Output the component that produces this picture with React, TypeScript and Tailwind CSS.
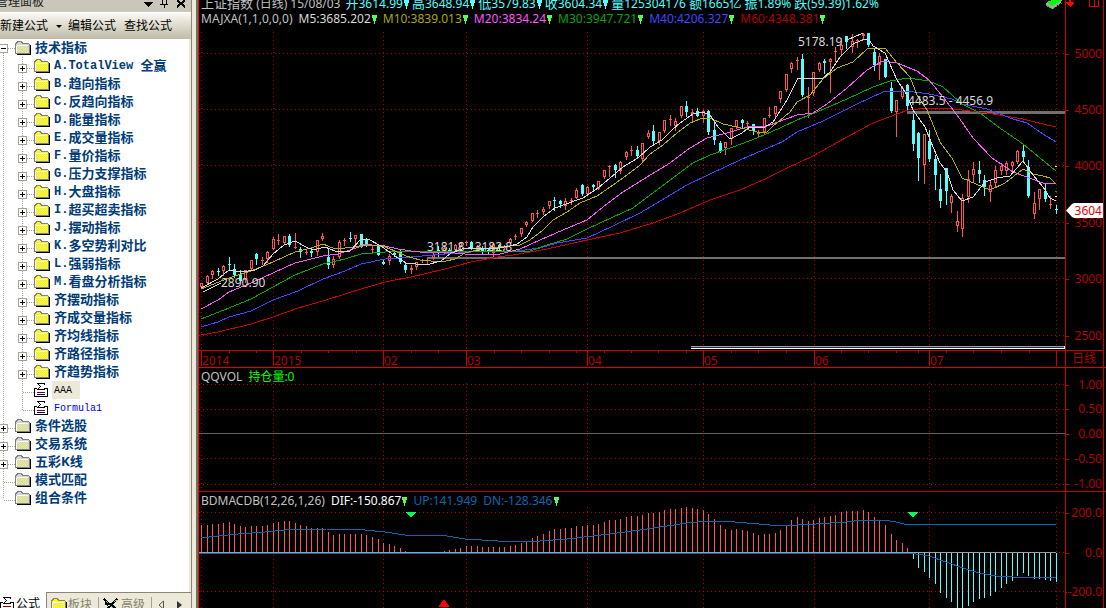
import type { ReactNode } from 'react';

const STEP = 855 / 155;
const barX = (i: number) => Math.round(201 + i * STEP);
const plotLeft = (x: number) => `${((x - 199) / 866) * 100}%`;

const months = [
  { x: 201, label: '2014' },
  { x: 273, label: '2015' },
  { x: 383, label: '02' },
  { x: 466, label: '03' },
  { x: 587, label: '04' },
  { x: 703, label: '05' },
  { x: 814, label: '06' },
  { x: 929, label: '07' },
  { x: 1056, label: '' },
];

const weekTicks = [
  229, 256, 301, 328, 356, 411, 438, 494, 521, 549, 576, 604, 631, 658, 686, 731, 758, 786, 841, 868,
  896, 918, 946, 973, 1001, 1029,
];

// high, body top, body bottom, low (in plot rows), "r" = up day, "c" = down day
const candles = `283 283 287 287 r|275 276 283 283 r|270 271 275 278 r|268 271 272 275 c|265 266 271 275 r|257 264 265 270 c
264 269 275 277 c|270 274 281 281 c|270 270 280 282 r|260 260 269 269 r|253 254 259 264 c|257 260 261 264 r
251 252 259 262 r|237 239 249 249 r|234 240 241 244 r|236 236 243 243 r|234 236 245 246 c|233 247 248 248 r
247 249 252 257 c|249 252 253 254 r|248 251 253 256 c|240 240 252 255 r|233 236 239 240 r|249 257 265 268 c
256 259 265 267 r|240 242 257 258 r|238 240 241 245 r|232 238 239 241 c|235 235 239 243 r|234 234 246 247 c
238 240 245 246 c|246 249 250 252 r|246 246 255 255 c|260 262 264 264 c|254 256 261 264 r|250 253 255 256 c
249 251 262 263 c|263 265 270 272 c|265 268 270 273 r|262 262 267 269 r|259 260 261 262 r|258 260 261 263 r
253 255 258 259 r|246 250 251 256 c|245 248 252 254 r|248 250 253 254 c|244 245 250 251 r|242 243 247 248 r
241 242 243 245 r|241 242 248 249 c|245 247 250 251 r|246 248 252 253 c|249 250 252 253 c|243 244 253 256 r
244 245 248 249 c|245 246 248 249 r|238 239 243 243 r|234 236 237 239 r|228 228 234 236 r|221 222 225 226 r
213 213 221 221 r|210 213 214 217 r|207 209 212 214 r|201 201 206 208 r|197 200 201 210 c|200 201 204 207 c
198 201 206 209 r|198 200 201 204 r|188 190 198 198 r|184 185 194 195 c|186 187 194 194 r|184 185 187 191 c
181 181 189 189 r|170 170 177 178 r|165 166 167 176 r|164 165 170 177 c|161 162 171 173 r|151 152 157 159 r
146 150 151 155 r|146 150 156 158 c|143 143 159 162 r|130 133 137 138 r|125 131 141 144 c|132 132 141 144 r
120 120 131 132 r|115 119 120 125 r|118 121 126 130 r|106 106 116 117 r|101 106 112 116 c|109 112 114 120 r
108 111 116 116 c|110 111 116 122 r|110 111 132 134 c|122 130 140 144 c|141 143 152 152 c|142 142 148 154 r
128 128 139 144 r|120 120 127 128 r|119 120 123 127 c|121 123 124 127 r|124 124 131 134 c|130 133 134 136 r
118 118 132 133 r|107 115 116 117 r|106 106 114 116 r|91 91 99 102 r|74 74 90 91 r|62 63 69 72 r
57 60 61 69 r|54 59 95 96 c|87 97 98 117 r|72 72 93 95 r|62 63 70 71 r|59 61 63 73 c
58 59 62 92 r|47 51 52 61 r|38 45 50 54 r|36 36 42 48 c|34 41 47 52 r|39 40 41 47 r
33 34 36 39 r|33 33 45 46 c|49 52 65 70 c|53 56 65 79 r|59 59 77 77 c|82 88 111 112 c
100 100 112 136 r|86 88 97 98 r|84 85 106 109 c|114 120 144 150 c|132 133 158 180 c|134 134 165 183 r
130 141 159 161 c|155 159 175 189 c|174 189 201 207 c|168 168 191 204 c|194 196 203 212 r|211 221 226 231 r
194 198 229 236 r|170 179 197 202 r|162 169 175 181 r|161 170 174 182 c|175 180 187 195 c|180 185 192 201 r
166 170 183 186 r|163 166 171 174 r|161 163 171 174 r|161 162 166 170 r|150 151 162 163 r|145 151 157 160 c
160 167 196 197 c|192 203 214 218 r|189 189 199 209 r|184 191 199 201 c|196 204 205 208 r|205 209 210 213 c`
  .split(/[|\n]/)
  .map((row) => {
    const [high, top, bottom, low, kind] = row.split(' ');
    return { high: +high, top: +top, bottom: +bottom, low: +low, up: kind === 'r' };
  });

const averages = [
  {
    color: '#c80000',
    points:
      '201,335 218,332 251,324 273,317 298,308 323,301 345,294 361,289 385,282 411,277 445,269 471,262 498,257 513,255 547,249 587,240 620,233 653,223 680,213 710,200 740,190 765,179 787,168 813,156 847,137 873,123 897,114 908,110 929,108 953,109 987,113 1023,119 1043,124 1056,127',
  },
  {
    color: '#4444ff',
    points:
      '201,327 218,322 229,317 251,311 273,300 298,291 323,279 345,271 361,264 385,259 411,257 445,254 471,252 498,251 517,251 540,248 557,243 587,238 613,226 640,213 667,197 687,185 710,174 740,160 763,150 782,142 797,132 823,121 857,104 883,92 907,91 929,94 952,99 962,104 987,109 1013,119 1027,123 1043,134 1056,142',
  },
  {
    color: '#00a800',
    points:
      '201,319 229,308 251,299 273,287 295,275 323,264 345,259 361,254 385,252 405,251 445,251 498,251 530,251 547,245 567,239 587,229 613,217 633,208 653,193 673,178 693,163 710,155 733,147 757,138 780,128 797,120 817,112 847,99 873,87 890,81 908,78 929,81 943,87 962,104 980,113 997,126 1023,144 1040,158 1056,171',
  },
  {
    color: '#ff55ff',
    points:
      '201,309 218,300 229,292 251,283 273,273 295,263 323,256 338,254 356,248 366,245 385,246 398,249 411,251 428,253 445,252 475,255 500,254 520,249 540,240 563,230 587,220 603,207 623,192 647,177 670,163 690,148 707,138 727,133 747,127 767,126 797,115 813,113 827,104 847,88 867,70 883,61 897,63 917,71 929,80 943,97 957,115 973,138 992,158 1013,172 1043,183 1056,184',
  },
  {
    color: '#b4b400',
    points:
      '201,289 229,278 251,271 273,262 295,252 311,248 323,244 335,249 355,247 366,244 385,247 395,251 406,256 420,260 431,261 446,261 455,259 465,253 481,249 500,247 520,245 530,240 543,230 553,220 567,212 580,203 597,196 613,185 627,175 640,165 650,154 663,145 677,133 690,123 700,119 710,118 723,124 737,127 757,132 767,132 773,126 790,112 797,102 810,95 823,79 837,68 853,62 868,48 885,48 897,63 910,77 917,95 927,110 940,142 952,158 962,178 990,190 1005,183 1023,169 1033,174 1043,176 1050,178 1056,184',
  },
  {
    color: '#d8d8d8',
    points:
      '201,288 218,279 229,270 241,272 255,270 263,266 273,254 284,245 295,241 306,247 313,250 325,247 335,251 350,251 361,239 368,239 381,246 398,258 406,263 426,265 441,261 451,253 465,248 498,248 510,246 517,244 527,237 533,227 543,217 555,208 563,205 583,198 598,188 610,178 623,167 638,158 650,147 662,140 672,130 680,123 693,114 703,112 710,115 718,127 730,139 742,133 750,127 763,128 773,122 787,100 798,78 823,78 830,72 840,57 853,44 865,39 870,41 873,46 885,53 897,80 907,95 913,110 925,127 933,147 940,163 947,172 953,190 962,201 973,197 985,182 997,178 1010,176 1023,161 1033,175 1043,187 1050,198 1056,201',
  },
];

// rows of the histogram end, in thirds of a pixel below 490
const histogram = [
  105, 105, 102, 102, 99, 96, 102, 108, 111, 108, 108, 108, 105, 99, 96, 93, 93, 99, 105, 108, 114, 114,
  114, 126, 135, 132, 132, 132, 132, 132, 136, 141, 147, 159, 162, 168, 174, 183, 187, 187, 187, 187, 187,
  187, 183, 180, 177, 174, 168, 168, 168, 171, 171, 171, 171, 171, 168, 165, 159, 153, 144, 138, 132, 123,
  117, 117, 114, 114, 108, 108, 105, 105, 102, 96, 90, 90, 87, 81, 78, 78, 75, 69, 69, 66, 60, 57, 57, 54,
  51, 54, 57, 60, 72, 87, 105, 117, 120, 117, 120, 123, 129, 135, 132, 132, 129, 120, 108, 90, 81, 87, 93,
  90, 84, 81, 78, 75, 66, 63, 63, 63, 60, 66, 81, 90, 105, 132, 150, 159, 174, 207, 234, 246, 264, 282,
  309, 324, 336, 360, 360, 348, 336, 327, 324, 318, 306, 294, 282, 273, 258, 249, 258, 267, 267, 270, 273,
  276,
];

const folders = [
  ['A.TotalView ', '全赢'],
  ['B.', '趋向指标'],
  ['C.', '反趋向指标'],
  ['D.', '能量指标'],
  ['E.', '成交量指标'],
  ['F.', '量价指标'],
  ['G.', '压力支撑指标'],
  ['H.', '大盘指标'],
  ['I.', '超买超卖指标'],
  ['J.', '摆动指标'],
  ['K.', '多空势利对比'],
  ['L.', '强弱指标'],
  ['M.', '看盘分析指标'],
  ['', '齐摆动指标'],
  ['', '齐成交量指标'],
  ['', '齐均线指标'],
  ['', '齐路径指标'],
  ['', '齐趋势指标'],
];

const roots = [
  { name: '条件选股', open: true },
  { name: '交易系统', open: true },
  { name: '五彩K线', open: true },
  { name: '模式匹配', open: false },
  { name: '组合条件', open: false },
];

const FolderIcon = ({ bright = false }: { bright?: boolean }) => (
  <svg width="16" height="14" viewBox="0 0 16 14" shapeRendering="crispEdges" className="shrink-0">
    <path d="M2 13.500h13.500V4" fill="none" stroke="#000" />
    <path d="M0 2h1V1h1V0h5v1h1v1h6v1h1v10H0z" fill="#808080" />
    <path d="M1 3h1V2h1V1h3v1h1v1h7v9H1z" fill={bright ? '#ffff00' : '#d4d4d4'} />
    <g stroke={bright ? '#e4e488' : '#ecec70'} strokeDasharray="1 1">
      <path d="M2 5.500h11M2 7.500h11M2 9.500h11M2 11.500h11" />
      <path d="M3 6.500h10M3 8.500h10M3 10.500h10" />
    </g>
    <path d="M2 4.500h11M1.500 5v7" stroke="#fff" fill="none" />
  </svg>
);

const FormulaIcon = () => (
  <svg width="14" height="14" viewBox="0 0 14 14" shapeRendering="crispEdges" className="shrink-0">
    <path d="M3 5.500H.5v8h13v-8H11" fill="#fff" stroke="#000" />
    <path d="M10.500 2V.5H3.500l3 3-3 3h7V5" fill="none" stroke="#000" />
    <path d="M3 9.500h8" stroke="#800000" />
    <path d="M3 11.500h8" stroke="#000080" />
  </svg>
);

const Expander = ({ cx, cy, minus = false }: { cx: number; cy: number; minus?: boolean }) => (
  <g>
    <rect x={cx - 4} y={cy - 4} width="8" height="8" fill="#fff" stroke="#a5a295" />
    <path d={`M${cx - 2.5} ${cy}h5`} stroke="#000" />
    {!minus && <path d={`M${cx} ${cy - 2.5}v5`} stroke="#000" />}
  </g>
);

const RootGutter = ({ box, minus, first, last }: { box: boolean; minus?: boolean; first?: boolean; last?: boolean }) => (
  <svg width="15" height="18" shapeRendering="crispEdges" className="shrink-0">
    <path
      d={`M3.500 ${first ? 10 : 0}V${last ? 10 : 18}M4 ${first ? 9 : 11}.5h11`}
      stroke="#a5a295"
      strokeDasharray="1 1"
    />
    {box && <Expander cx={3.5} cy={first ? 9.5 : 11.5} minus={minus} />}
  </svg>
);

const ChildGutter = ({ box, last }: { box: boolean; last?: boolean }) => (
  <svg width="34" height="18" shapeRendering="crispEdges" className="shrink-0">
    <path d={`M3.500 0V18M22.500 0V${last ? 12 : 18}M23 11.500h11`} stroke="#a5a295" strokeDasharray="1 1" />
    {box && <Expander cx={22.5} cy={11.5} />}
  </svg>
);

const TreeRow = ({ children }: { children: ReactNode }) => (
  <li className="flex h-[18px] items-center whitespace-pre">{children}</li>
);

const Sidebar = () => (
  <aside className="flex w-[198px] shrink-0 border-r-2 border-[#6f6d64] bg-[#ece9d8]">
    <div className="flex w-[192px] flex-col border-r border-[#8a877a]">
      <header className="flex h-3 items-center justify-between overflow-hidden bg-[#cac6ba] pr-1 text-xs text-[#222]">
        <h2 className="-mt-2 -ml-1 leading-3">管理面板</h2>
        <svg width="44" height="8" shapeRendering="crispEdges" className="-mt-1">
          <path d="M0 2h10L5 7z" fill="#000" />
          <path d="M19 0v4M23 0v4M17 4.500h8M21 5v3" stroke="#000" fill="none" />
          <path d="M34 0l8 7M42 0l-8 7" stroke="#000" strokeWidth="2" />
        </svg>
      </header>
      <nav className="flex h-[27px] items-center gap-1.5 border-t border-white bg-linear-to-b from-[#faf9f4] to-[#bfbba6] text-xs text-black">
        <button type="button" className="flex items-center gap-2">
          新建公式
          <svg width="6" height="3">
            <path d="M0 0h6L3 3z" fill="#000" />
          </svg>
        </button>
        <button type="button">编辑公式</button>
        <button type="button" className="pl-0.5">查找公式</button>
      </nav>
      <div className="min-h-0 flex-1 border-r-2 border-[#ece9d8] bg-white">
        <ul className="text-[13px] font-bold text-[#003c78]">
          <TreeRow>
            <RootGutter box minus first />
            <FolderIcon />
            <span className="pl-1">技术指标</span>
          </TreeRow>
          {folders.map(([code, name]) => (
            <TreeRow key={code + name}>
              <ChildGutter box />
              <FolderIcon bright />
              <span className="pl-1 font-['Liberation_Mono',monospace] text-xs">{code}</span>
              <span>{name}</span>
            </TreeRow>
          ))}
          <TreeRow>
            <ChildGutter box={false} />
            <FormulaIcon />
            <span className="ml-1 flex h-[18px] items-center bg-[#ece9d8] pr-2 pl-0.5 font-['Liberation_Mono',monospace] text-[10px] font-normal text-black">
              AAA
            </span>
          </TreeRow>
          <TreeRow>
            <ChildGutter box={false} last />
            <FormulaIcon />
            <span className="ml-1 pl-0.5 font-['Liberation_Mono',monospace] text-[10px] font-normal text-[#0000e0]">
              Formula1
            </span>
          </TreeRow>
          {roots.map((root, i) => (
            <TreeRow key={root.name}>
              <RootGutter box={root.open} last={i === roots.length - 1} />
              <FolderIcon />
              <span className="pl-1">{root.name}</span>
            </TreeRow>
          ))}
        </ul>
      </div>
      <footer className="flex h-4 shrink-0 overflow-hidden text-xs text-[#85826f]">
        <button type="button" className="flex h-6 w-[46px] items-center gap-0.5 bg-white text-black">
          <FormulaIcon />
          公式
        </button>
        <div className="flex h-6 flex-1 items-center border-t border-l border-[#8a877a]">
          <button type="button" className="flex items-center gap-px border-r border-[#a5a295] pr-1.5 pl-1">
            <FolderIcon bright />
            板块
          </button>
          <button type="button" className="flex items-center gap-0.5 border-r border-[#a5a295] pr-1.5 pl-1">
            <svg width="16" height="14" shapeRendering="crispEdges">
              <path d="M1 1l5 5 3 1 6 6M1 12l4-2 4-4 5-5M2 5l3 2M10 9l1 4" stroke="#000" strokeWidth="2" fill="none" />
              <path d="M3 3l2 2M4 11l2-1M8 8l2 2M11 4l2-2" stroke="#00e0e0" />
              <path d="M13 2h2M6 7h1" stroke="#e8e000" />
            </svg>
            高级
          </button>
          <svg width="28" height="10" className="ml-1.5">
            <path d="M5.500 1v8L1 5z" fill="none" stroke="#555" />
            <path d="M19 1v8l5-4z" fill="#333" />
          </svg>
        </div>
      </footer>
    </div>
  </aside>
);

const Pin = ({ color = '#54ff54' }: { color?: string }) => (
  <svg width="5" height="9" shapeRendering="crispEdges" className="ml-px inline-block">
    <path d="M0 0h5v3H4v3H3v3H2V6H1V3H0z" fill={color} />
  </svg>
);

const Reading = ({ label, value, pin = false }: { label: string; value: string; pin?: boolean }) => (
  <span>
    <span className="text-[13px]">{label}</span>
    {value}
    {pin && <Pin color="#54ffff" />}
  </span>
);

const Grid = ({ top, bottom, rows }: { top: number; bottom: number; rows: number[] }) => (
  <g stroke="#b40000" strokeDasharray="1 3">
    {rows.map((y) => (
      <path key={y} d={`M199 ${y + 0.5}H1065`} />
    ))}
    {months.map(({ x }) => (
      <path key={x} d={`M${x + 0.5} ${top}V${bottom}`} />
    ))}
  </g>
);

const Plot = ({ y, height, children }: { y: number; height: number; children: ReactNode }) => (
  <svg
    viewBox={`199 ${y} 866 ${height}`}
    preserveAspectRatio="none"
    shapeRendering="crispEdges"
    className="absolute inset-0 h-full w-full"
  >
    {children}
  </svg>
);

const AxisLabel = ({ y, text }: { y: number; text: string }) => (
  <div className="absolute inset-x-0 flex h-4 -translate-y-1/2 items-center justify-between pr-px" style={{ top: y }}>
    <span className="h-px w-[3px] bg-[#c80000]" />
    <span>{text}</span>
  </div>
);

const Axis = ({ children }: { children: ReactNode }) => (
  <div className="relative mr-0.5 w-[39px] shrink-0 border-x border-[#c80000] text-[#b40000]">{children}</div>
);

const Note = ({ x, y, text }: { x: number; y: number; text: string }) => (
  <span className="absolute -translate-y-1/2 leading-4 text-[#d8d8d8]" style={{ left: plotLeft(x), top: y }}>
    {text}
  </span>
);

const PricePane = () => (
  <section className="flex h-[368px] shrink-0 border-b border-[#e00000]">
    <div className="relative min-w-0 flex-1">
      <Plot y={0} height={367}>
        <Grid top={32} bottom={350} rows={[53, 109, 165, 222, 278, 335]} />
        <path d="M427 258H1065" stroke="#707070" strokeWidth="2" />
        <path d="M907 112.500H1065" stroke="#707070" strokeWidth="3" />
        {candles.map((c, i) => {
          const x = barX(i);
          const color = c.up ? '#ff5454' : '#54ffff';
          return (
            <g key={i} fill={color}>
              <rect x={x} y={c.high} width="1" height={c.low - c.high + 1} />
              <rect x={x - 1} y={c.top} width="3" height={Math.max(1, c.bottom - c.top)} />
              {c.up && c.bottom - c.top > 2 && (
                <rect x={x} y={c.top + 1} width="1" height={c.bottom - c.top - 2} fill="#000" />
              )}
            </g>
          );
        })}
        {averages.map((line) => (
          <polyline key={line.color} points={line.points} fill="none" stroke={line.color} />
        ))}
        <path d="M203 292L221 283M847 40L863 33" stroke="#d8d8d8" />
        <path d="M691 346.500H1065" stroke="#a0a0a0" />
        <path d="M691 347.500H1064" stroke="#203050" />
        <path d="M691 348.500H1065M1064.500 346v3" stroke="#fff" />
        <path d="M1055 166.500h2" stroke="#ffff54" />
        <path d="M1055 191.500h2" stroke="#00a800" />
        <path d="M1055 196.500h2" stroke="#fff" />
        <path d="M199 350.500H1065" stroke="#c80000" />
        {months.map(({ x }) => (
          <path key={x} d={`M${x + 0.5} 350V366`} stroke="#c80000" />
        ))}
        {weekTicks.map((x) => (
          <path key={x} d={`M${x + 0.5} 350v3`} stroke="#c80000" />
        ))}
      </Plot>
      <header className="relative -mt-1 flex flex-col pl-0.5 leading-[15px] whitespace-nowrap text-[#c0c0c0]">
        <div className="flex h-[15px] items-center gap-[3px] text-[#54ffff]">
          <span className="text-[#c0c0c0]">
            <span className="text-[13px]">上证指数</span> (日线)
          </span>
          <span className="pr-0.5 text-[#c0c0c0]">15/08/03</span>
          <Reading label="开" value="3614.99" pin />
          <Reading label="高" value="3648.94" pin />
          <Reading label="低" value="3579.83" pin />
          <Reading label="收" value="3604.34" pin />
          <Reading label="量" value="125304176" />
          <Reading label="额" value="1665亿" />
          <Reading label="振" value="1.89%" />
          <Reading label="跌" value="(59.39)1.62%" />
        </div>
        <div className="flex h-[15px] items-center gap-1.5">
          <span>MAJXA(1,1,0,0,0)</span>
          <span className="text-[#d8d8d8]">M5:3685.202<Pin /></span>
          <span className="text-[#a8a800]">M10:3839.013<Pin /></span>
          <span className="text-[#ff55ff]">M20:3834.24<Pin /></span>
          <span className="text-[#00a800]">M30:3947.721<Pin /></span>
          <span className="text-[#4444ff]">M40:4206.327<Pin /></span>
          <span className="text-[#b40000]">M60:4348.381<Pin /></span>
        </div>
      </header>
      <Note x={798} y={42} text="5178.19" />
      <Note x={908} y={101} text="4483.5 - 4456.9" />
      <Note x={427} y={247} text="3181.8 - 3182.8" />
      <Note x={221} y={283} text="2890.90" />
      {months.map(({ x, label }) => (
        <span
          key={x}
          className="absolute bottom-0 leading-3 text-[#b40000]"
          style={{ left: plotLeft(x + 1) }}
        >
          {label}
        </span>
      ))}
      <svg width="18" height="10" shapeRendering="crispEdges" className="absolute top-0 right-0.5">
        <path d="M1 3L11 0h6l-1 3-9 6-6-3z" fill="#a8a8a8" />
        <path d="M1 2L8 0h8v1L7 6z" fill="#00ff00" />
        <path d="M1 5l6 4 10-6" stroke="#00c000" strokeDasharray="1 1" fill="none" />
      </svg>
    </div>
    <Axis>
      <svg width="36" height="8" shapeRendering="crispEdges" className="absolute top-0 left-0">
        <path d="M0 2h8v1L6 5 4 7 2 5 0 3z" fill="#f00" />
        <path d="M3 0h2v3H3z" fill="#f00" />
        <path d="M23.500 0v6.500h9V0M28.500 0v6" fill="none" stroke="#e00000" />
      </svg>
      <AxisLabel y={54} text="5000" />
      <AxisLabel y={110} text="4500" />
      <AxisLabel y={166} text="4000" />
      <AxisLabel y={223} text="3500" />
      <AxisLabel y={279} text="3000" />
      <AxisLabel y={336} text="2500" />
      <div className="absolute inset-x-0 top-[203px] flex h-[15px] items-center text-[#e00000]">
        <svg width="8" height="15" className="shrink-0">
          <path d="M0 7.500L6 1l2-1v15l-2-1z" fill="#fff" />
        </svg>
        <span className="flex-1 bg-white pr-px text-right leading-[15px]">3604</span>
      </div>
      <div className="absolute inset-x-0 bottom-0 h-[17px] border-t border-[#c80000] pl-1.5 leading-4">日线</div>
    </Axis>
  </section>
);

const VolumePane = () => (
  <section className="flex h-[124px] shrink-0 border-b border-[#c80000]">
    <div className="relative min-w-0 flex-1">
      <Plot y={368} height={123}>
        <Grid top={383} bottom={491} rows={[384, 409, 458, 484]} />
        <path d="M199 433.500H1065" stroke="#606060" />
      </Plot>
      <h3 className="relative flex gap-1.5 pl-0.5 leading-[18px] text-[#c0c0c0]">
        QQVOL <span className="text-[#00ff00]">持仓量:0</span>
      </h3>
    </div>
    <Axis>
      <AxisLabel y={17} text="1.00" />
      <AxisLabel y={41} text="0.50" />
      <AxisLabel y={66} text="0.00" />
      <AxisLabel y={91} text="-0.50" />
      <AxisLabel y={116} text="-1.00" />
    </Axis>
  </section>
);

const MacdPane = () => (
  <section className="flex min-h-0 flex-1">
    <div className="relative min-w-0 flex-1 overflow-hidden">
      <Plot y={492} height={116}>
        <Grid top={507} bottom={608} rows={[512, 552, 591]} />
        {histogram.map((z, i) => {
          const end = 490 + Math.round(z / 3);
          return end < 552 ? (
            <rect key={i} x={barX(i)} y={end} width="1" height={552 - end} fill="#ff5454" />
          ) : (
            <rect key={i} x={barX(i)} y={553} width="1" height={Math.max(0, end - 553)} fill="#54ffff" />
          );
        })}
        <path d="M199 552.500H1056" stroke="#a0a0a0" />
        <polyline
          points="201,538 218,536 238,534 265,532 295,529 326,529 365,530 385,532 405,535 441,535 465,539 498,541 540,541 567,539 593,536 617,533 640,530 667,526 687,523 707,521 722,521 747,523 770,525 797,525 816,524 846,522 863,520 883,520 896,522 906,524.500 1056,524.500"
          fill="none"
          stroke="#0868b0"
        />
        <polyline
          points="199,553.500 913,553.500 929,556 946,562 963,568 979,573 996,576 1013,577 1023,577 1046,577 1056,578"
          fill="none"
          stroke="#0868b0"
        />
        <path d="M406 512h10l-5 6zM908 512h10l-5 6z" fill="#00ff54" />
        <path d="M439 607h10v-1l-5-7-5 7z" fill="#f00" />
      </Plot>
      <h3 className="relative flex gap-1.5 pl-0.5 leading-[18px] whitespace-nowrap text-[#c0c0c0]">
        <span>BDMACDB(12,26,1,26)</span>
        <span className="text-white">DIF:-150.867<Pin /></span>
        <span className="text-[#0868b0]">UP:141.949</span>
        <span className="text-[#0868b0]">DN:-128.346<Pin /></span>
      </h3>
    </div>
    <Axis>
      <AxisLabel y={21} text="200.0" />
      <AxisLabel y={61} text="0.0" />
      <AxisLabel y={100} text="-200.0" />
    </Axis>
  </section>
);

export default function App() {
  return (
    <div className="flex h-screen overflow-hidden bg-black font-['Noto_Sans','Noto_Sans_CJK_SC',sans-serif]">
      <Sidebar />
      <main className="flex min-w-0 flex-1 flex-col border-l border-[#f00000] bg-black text-xs">
        <PricePane />
        <VolumePane />
        <MacdPane />
      </main>
    </div>
  );
}
